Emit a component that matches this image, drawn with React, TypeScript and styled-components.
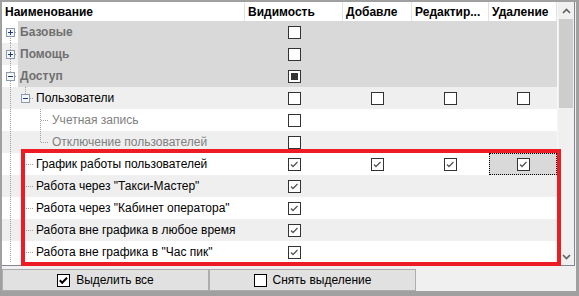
import styled, { createGlobalStyle } from "styled-components";

const GlobalStyle = createGlobalStyle`
  html, body { margin: 0; padding: 0; background: #f0f0f0; }
  * { box-sizing: border-box; }
`;

const COLS = "16px 227px 98px 69px 77px 68px";
const DOT = "#a0a0a0";

type Check = "none" | "off" | "on" | "mixed";

type RowData = {
  label: string;
  level: 0 | 1 | 2;
  group?: boolean;
  expander?: "plus" | "minus";
  slots: { v?: "full" | "top" | "bottom"; h?: boolean }[];
  vis: Check;
  add: Check;
  edit: Check;
  del: Check;
  selectedDel?: boolean;
};

const rows: RowData[] = [
  { label: "Базовые", level: 0, group: true, expander: "plus", slots: [{ v: "bottom", h: true }], vis: "off", add: "none", edit: "none", del: "none" },
  { label: "Помощь", level: 0, group: true, expander: "plus", slots: [{ v: "full", h: true }], vis: "off", add: "none", edit: "none", del: "none" },
  { label: "Доступ", level: 0, group: true, expander: "minus", slots: [{ v: "full", h: true }], vis: "mixed", add: "none", edit: "none", del: "none" },
  { label: "Пользователи", level: 1, expander: "minus", slots: [{ v: "full" }, { v: "top", h: true }], vis: "off", add: "off", edit: "off", del: "off" },
  { label: "Учетная запись", level: 2, slots: [{ v: "full" }, {}, { v: "full", h: true }], vis: "off", add: "none", edit: "none", del: "none" },
  { label: "Отключение пользователей", level: 2, slots: [{ v: "full" }, {}, { v: "top", h: true }], vis: "off", add: "none", edit: "none", del: "none" },
  { label: "График работы пользователей", level: 1, slots: [{ v: "full" }, { h: true }], vis: "on", add: "on", edit: "on", del: "on", selectedDel: true },
  { label: "Работа через \"Такси-Мастер\"", level: 1, slots: [{ v: "full" }, { h: true }], vis: "on", add: "none", edit: "none", del: "none" },
  { label: "Работа через \"Кабинет оператора\"", level: 1, slots: [{ v: "full" }, { h: true }], vis: "on", add: "none", edit: "none", del: "none" },
  { label: "Работа вне графика в любое время", level: 1, slots: [{ v: "full" }, { h: true }], vis: "on", add: "none", edit: "none", del: "none" },
  { label: "Работа вне графика в \"Час пик\"", level: 1, slots: [{ v: "full" }, { h: true }], vis: "on", add: "none", edit: "none", del: "none" },
];

// offsets of the tree line inside each 16px slot
const LINE_X = [8, 7, 6];

const Frame = styled.div`
  position: relative;
  width: 579px;
  height: 296px;
  background: #f0f0f0;
  border-top: 2px solid #a0a0a0;
  border-left: 2px solid #a0a0a0;
  border-right: 3px solid #a0a0a0;
  border-bottom: 5px solid #a0a0a0;
  padding-right: 1px;
  display: flex;
  flex-direction: column;
  font-family: "Liberation Sans", Arial, sans-serif;
  font-size: 12px;
  color: #000;
`;

const Grid = styled.div`
  display: flex;
  height: 264px;
  background: #fff;
  border-right: 1px solid #828790;
  border-bottom: 1px solid #828790;
`;

const Body = styled.div`
  width: 555px;
  display: flex;
  flex-direction: column;
`;

const Header = styled.div`
  display: grid;
  grid-template-columns: 243px 98px 69px 77px 68px;
  height: 19px;
  background: #fff;
`;

const HeadCell = styled.div`
  display: flex;
  align-items: center;
  padding-left: 3px;
  font-weight: bold;
  white-space: nowrap;
  overflow: hidden;
  border-right: 1px solid #e3e3e3;
  &:last-child { border-right: 1px solid #e3e3e3; }
`;

const Row = styled.div<{ $zebra: boolean }>`
  display: grid;
  grid-template-columns: ${COLS};
  height: 22px;
  background: ${({ $zebra }) => ($zebra ? "#efefef" : "#fff")};
`;

const Cell = styled.div<{ $group?: boolean; $selected?: boolean }>`
  display: flex;
  align-items: center;
  justify-content: center;
  background: ${({ $group, $selected }) => ($group || $selected ? "#d9d9d9" : "transparent")};
  border: ${({ $selected }) => ($selected ? "1px dotted #000" : "none")};
`;

const NameCell = styled.div<{ $group?: boolean }>`
  display: flex;
  align-items: stretch;
  background: ${({ $group }) => ($group ? "#d9d9d9" : "transparent")};
`;

const Slot = styled.span<{ $x: number; $v?: "full" | "top" | "bottom"; $h?: boolean; $hFrom: number }>`
  position: relative;
  flex: 0 0 16px;
  width: 16px;
  &::before {
    content: "";
    display: ${({ $v }) => ($v ? "block" : "none")};
    position: absolute;
    left: ${({ $x }) => $x}px;
    width: 1px;
    top: ${({ $v }) => ($v === "bottom" ? "11px" : "0")};
    bottom: ${({ $v }) => ($v === "top" ? "11px" : "0")};
    background-image: linear-gradient(to bottom, ${DOT} 50%, transparent 50%);
    background-size: 1px 2px;
  }
  &::after {
    content: "";
    display: ${({ $h }) => ($h ? "block" : "none")};
    position: absolute;
    top: 11px;
    left: ${({ $hFrom }) => $hFrom}px;
    right: 1px;
    height: 1px;
    background-image: linear-gradient(to right, ${DOT} 50%, transparent 50%);
    background-size: 2px 1px;
  }
`;

const ExpanderBox = styled.svg<{ $x: number }>`
  position: absolute;
  left: ${({ $x }) => $x - 4}px;
  top: 7px;
  z-index: 1;
`;

const Label = styled.span<{ $level: number; $group?: boolean }>`
  display: flex;
  align-items: center;
  padding-left: 2px;
  white-space: nowrap;
  font-weight: ${({ $group }) => ($group ? "bold" : "normal")};
  color: ${({ $group, $level }) => ($group ? "#6f6f6f" : $level === 2 ? "#808080" : "#000")};
`;

const Scrollbar = styled.div`
  width: 17px;
  background: #f0f0f0;
  border-left: 1px solid #f7f7f7;
  display: flex;
  flex-direction: column;
  align-items: center;
`;

const ArrowBtn = styled.div`
  height: 17px;
  width: 100%;
  display: flex;
  align-items: center;
  justify-content: center;
`;

const Track = styled.div`
  flex: 1;
  width: 100%;
  padding: 0 1px;
`;

const Thumb = styled.div`
  height: 89px;
  background: #cdcdcd;
`;

const ButtonBar = styled.div`
  display: flex;
  margin-top: 3px;
  height: 22px;
`;

const Button = styled.div`
  width: 207px;
  display: flex;
  align-items: center;
  justify-content: center;
  gap: 6px;
  background: #e1e1e1;
  border: 1px solid #adadad;
  & + & { border-left: 1px solid #adadad; }
`;

const Highlight = styled.div`
  position: absolute;
  left: 19px;
  top: 147px;
  width: 540px;
  height: 117px;
  border: 4px solid #ed1c24;
  pointer-events: none;
`;

const Expander = ({ kind, x }: { kind: "plus" | "minus"; x: number }) => (
  <ExpanderBox $x={x} width="9" height="9" viewBox="0 0 9 9">
    <rect x="0.5" y="0.5" width="8" height="8" fill="#f4f6f9" stroke="#8d9aae" />
    <line x1="2" y1="4.5" x2="7" y2="4.5" stroke="#1d3d7c" />
    {kind === "plus" && <line x1="4.5" y1="2" x2="4.5" y2="7" stroke="#1d3d7c" />}
  </ExpanderBox>
);

const GridCheck = ({ state }: { state: Check }) => {
  if (state === "none") return null;
  return (
    <svg width="13" height="13" viewBox="0 0 13 13">
      <rect x="0.5" y="0.5" width="12" height="12" fill="#fff" stroke="#333" />
      {state === "mixed" && <rect x="3" y="3" width="7" height="7" fill="#333" />}
      {state === "on" && (
        <polyline points="3,6.5 5,8.5 9.5,4" fill="none" stroke="#555" strokeWidth="1.3" />
      )}
    </svg>
  );
};

const ButtonCheck = ({ on }: { on: boolean }) => (
  <svg width="13" height="13" viewBox="0 0 13 13">
    <rect x="0.5" y="0.5" width="12" height="12" fill="#fff" stroke="#000" />
    {on && <polyline points="2.8,6.3 5.2,8.8 10,3.8" fill="none" stroke="#000" strokeWidth="2" />}
  </svg>
);

const Chevron = ({ up }: { up: boolean }) => (
  <svg width="9" height="6" viewBox="0 0 9 6">
    <polyline
      points={up ? "1,5 4.5,1.5 8,5" : "1,1 4.5,4.5 8,1"}
      fill="none"
      stroke="#606060"
      strokeWidth="1.6"
    />
  </svg>
);

const TreeRow = ({ row, index }: { row: RowData; index: number }) => {
  const [first, ...rest] = row.slots;
  const slotProps = (s: RowData["slots"][number], i: number) => {
    const x = LINE_X[i];
    const hasBox = row.expander && i === row.slots.length - 1;
    return { $x: x, $v: s.v, $h: s.h, $hFrom: hasBox ? x + 5 : x + 1 };
  };
  return (
    <Row $zebra={index % 2 === 1}>
      <Slot {...slotProps(first, 0)}>
        {row.level === 0 && row.expander && <Expander kind={row.expander} x={LINE_X[0]} />}
      </Slot>
      <NameCell $group={row.group}>
        {rest.map((s, i) => (
          <Slot key={i} {...slotProps(s, i + 1)}>
            {row.expander && i + 1 === row.slots.length - 1 && (
              <Expander kind={row.expander} x={LINE_X[i + 1]} />
            )}
          </Slot>
        ))}
        <Label $level={row.level} $group={row.group}>
          {row.label}
        </Label>
      </NameCell>
      <Cell $group={row.group}>
        <GridCheck state={row.vis} />
      </Cell>
      <Cell $group={row.group}>
        <GridCheck state={row.add} />
      </Cell>
      <Cell $group={row.group}>
        <GridCheck state={row.edit} />
      </Cell>
      <Cell $group={row.group} $selected={row.selectedDel}>
        <GridCheck state={row.del} />
      </Cell>
    </Row>
  );
};

export default function App() {
  return (
    <>
      <GlobalStyle />
      <Frame>
        <Grid>
          <Body>
            <Header>
              <HeadCell>Наименование</HeadCell>
              <HeadCell>Видимость</HeadCell>
              <HeadCell>Добавле</HeadCell>
              <HeadCell>Редактир...</HeadCell>
              <HeadCell>Удаление</HeadCell>
            </Header>
            {rows.map((r, i) => (
              <TreeRow key={r.label} row={r} index={i} />
            ))}
          </Body>
          <Scrollbar>
            <ArrowBtn>
              <Chevron up />
            </ArrowBtn>
            <Track>
              <Thumb />
            </Track>
            <ArrowBtn>
              <Chevron up={false} />
            </ArrowBtn>
          </Scrollbar>
        </Grid>
        <ButtonBar>
          <Button>
            <ButtonCheck on />
            <span>Выделить все</span>
          </Button>
          <Button>
            <ButtonCheck on={false} />
            <span>Снять выделение</span>
          </Button>
        </ButtonBar>
        <Highlight />
      </Frame>
    </>
  );
}
